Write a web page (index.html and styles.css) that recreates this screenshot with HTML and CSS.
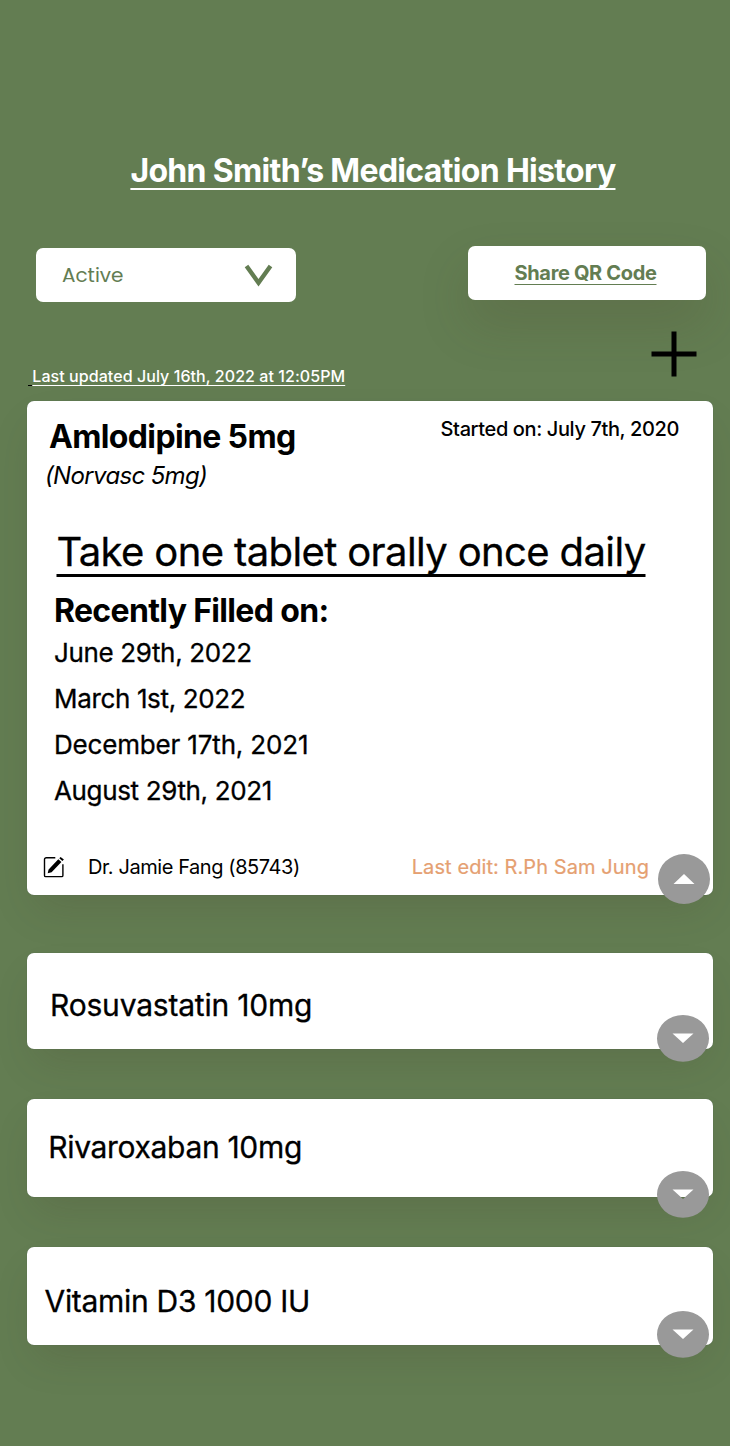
FILE: index.html
```
<!DOCTYPE html>
<html lang="en">
<head>
<meta charset="utf-8">
<title>Medication History</title>
<link rel="stylesheet" href="styles.css">
</head>
<body>
<main class="page">
  <h1 class="title"><span class="title-text">John Smith’s Medication History</span></h1>

  <div class="controls">
    <div class="select">
      <span class="select-label">Active</span>
      <svg class="select-icon" width="30" height="24" viewBox="0 0 30 24"><path d="M2.5 2 L14.5 18.8 L26.5 2" fill="none" stroke="#637d52" stroke-width="4.4"/></svg>
    </div>
    <a class="share"><span class="share-text">Share QR Code</span></a>
  </div>

  <div class="meta">
    <p class="updated"><span class="updated-lead"> </span><span class="updated-text">Last updated July 16th, 2022 at 12:05PM</span></p>
    <svg class="add" width="46" height="46" viewBox="0 0 46 46"><path d="M0.5 23H45.5M23 0.5V45.5" stroke="#000" stroke-width="5"/></svg>
  </div>

  <section class="card card-open">
    <header class="card-head">
      <div>
        <h2 class="drug">Amlodipine 5mg</h2>
        <p class="brand">(Norvasc 5mg)</p>
      </div>
      <p class="started">Started on: July 7th, 2020</p>
    </header>
    <p class="directions"><span class="directions-text">Take one tablet orally once daily</span></p>
    <h3 class="fills-title">Recently Filled on:</h3>
    <ul class="fills">
      <li class="fill">June 29th, 2022</li>
      <li class="fill">March 1st, 2022</li>
      <li class="fill fill-long">December 17th, 2021</li>
      <li class="fill">August 29th, 2021</li>
    </ul>
    <footer class="card-foot">
      <svg class="edit" width="22" height="22" viewBox="0 0 22 22">
        <path d="M12.3 1.8H3.3A1.8 1.8 0 0 0 1.5 3.6V19.4A1.2 1.2 0 0 0 2.7 20.6H18.7A1.2 1.2 0 0 0 19.9 19.4V8.3" fill="none" stroke="#000" stroke-width="1.4"/>
        <path d="M4.7 17.3L5.6 13.4L15.3 3.2L18.4 6.1L8.6 16.2Z M16.3 2.2L17.6 .9L20.9 3.6L19.4 5.1Z" fill="#000"/>
      </svg>
      <span class="doctor">Dr. Jamie Fang (85743)</span>
      <span class="last-edit">Last edit: R.Ph Sam Jung</span>
    </footer>
    <svg class="toggle toggle-up" width="52" height="50" viewBox="0 0 52 50"><path fill-rule="evenodd" fill="#999" d="M26 0A26 25 0 0 1 26 50A26 25 0 0 1 26 0ZM26 20L15.5 30H36.5Z"/></svg>
  </section>

  <section class="card card-rosuvastatin">
    <h2 class="name name-rosuvastatin">Rosuvastatin 10mg</h2>
    <svg class="toggle toggle-down" width="52" height="47" viewBox="0 0 52 47"><path fill-rule="evenodd" fill="#999" d="M26 0A26 23.4 0 0 1 26 46.8A26 23.4 0 0 1 26 0ZM15.5 18.5H36.5L26 28Z"/></svg>
  </section>

  <section class="card card-rivaroxaban">
    <h2 class="name name-rivaroxaban">Rivaroxaban 10mg</h2>
    <svg class="toggle toggle-low" width="52" height="47" viewBox="0 0 52 47"><path fill-rule="evenodd" fill="#999" d="M26 0A26 23.4 0 0 1 26 46.8A26 23.4 0 0 1 26 0ZM15.5 18.5H36.5L26 28Z"/></svg>
  </section>

  <section class="card card-vitamin">
    <h2 class="name name-vitamin">Vitamin D3 1000 IU</h2>
    <svg class="toggle toggle-down" width="52" height="47" viewBox="0 0 52 47"><path fill-rule="evenodd" fill="#999" d="M26 0A26 23.4 0 0 1 26 46.8A26 23.4 0 0 1 26 0ZM15.5 18.5H36.5L26 28Z"/></svg>
  </section>
</main>
</body>
</html>
```
FILE: styles.css
```
* { box-sizing: border-box; }
body { margin: 0; background: #637d52; color: #000; font-family: Inter, "Liberation Sans", sans-serif; }
h1, h2, h3, p, ul { margin: 0; padding: 0; }
ul { list-style: none; }
svg { display: block; flex: none; }
.page { height: 1446px; padding: 151px 17px 0 27px; overflow: hidden; }

.title { padding-left: 103.4px; font-size: 32px; line-height: 40px; font-weight: 700; letter-spacing: -0.675px; color: #fff; white-space: nowrap; }
.title-text, .share-text, .updated-text, .updated-lead, .directions-text { text-decoration: underline; text-decoration-skip-ink: none; }
.title-text { text-decoration-thickness: 2px; text-underline-offset: 6px; }

.controls { display: flex; justify-content: space-between; align-items: flex-start; margin-top: 55px; padding: 0 7px 0 9px; }
.select { display: flex; align-items: center; justify-content: space-between; width: 260px; height: 54px; margin-top: 2px; padding: 0 22px 0 26px; background: #fff; border-radius: 7px; }
.select-label { font-family: Poppins, Inter, sans-serif; font-size: 20px; line-height: 24px; font-weight: 400; color: #637d52; }
.select-icon { margin-top: 2px; }
.share { display: flex; align-items: center; justify-content: center; width: 238px; height: 54px; padding-right: 3px; background: #fff; border-radius: 7px; box-shadow: 0 24px 50px rgba(70, 60, 40, 0.18); }
.share-text { font-size: 20px; line-height: 24px; font-weight: 700; letter-spacing: -0.343px; color: #637d52; text-decoration-thickness: 1px; text-underline-offset: 4px; }

.meta { display: flex; justify-content: space-between; align-items: flex-start; height: 99px; padding: 29px 16px 0 1px; }
.updated { margin-top: 35px; font-size: 16px; line-height: 20px; font-weight: 500; letter-spacing: 0.063px; color: #fff; white-space: pre; }
.updated-text, .updated-lead { text-decoration-thickness: 1px; text-underline-offset: 3px; }
.updated-lead { color: #000; }

.card { position: relative; background: #fff; border-radius: 7px; box-shadow: 0 0 1px rgba(12, 26, 75, 0.24), 0 20px 40px -8px rgba(60, 50, 40, 0.16); }
.card-open { height: 494px; padding: 16px 34px 0 17px; }
.card-head { display: flex; justify-content: space-between; align-items: flex-start; }
.drug { padding-left: 5px; font-size: 32px; line-height: 40px; font-weight: 700; letter-spacing: -0.64px; }
.brand { padding-left: 1px; font-size: 24px; line-height: 38px; font-style: italic; font-weight: 400; letter-spacing: -0.65px; }
.started { font-size: 20px; line-height: 24px; font-weight: 500; letter-spacing: -0.38px; }
.directions { margin-top: 33px; padding-left: 12.5px; font-size: 40px; line-height: 48px; letter-spacing: -0.624px; white-space: nowrap; }
.directions-text { text-decoration-thickness: 2.5px; text-underline-offset: 8px; }
.directions, .fill, .name { font-weight: 400; -webkit-text-stroke: 0.3px #000; }
.fills-title { margin-top: 15px; padding-left: 10px; font-size: 32px; line-height: 40px; font-weight: 700; letter-spacing: -0.66px; }
.fills { margin-top: -1px; padding-left: 10px; }
.fill { font-size: 26px; line-height: 46px; letter-spacing: -0.35px; }
.fill-long { letter-spacing: -0.17px; }
.card-foot { display: flex; align-items: center; margin: 41px 0 0 -1px; font-size: 20px; line-height: 24px; white-space: nowrap; }
.doctor { margin-left: 23px; letter-spacing: -0.424px; }
.last-edit { margin-left: auto; margin-right: 30px; font-weight: 400; letter-spacing: 0.08px; color: #e5a071; -webkit-text-stroke: 0.2px #e5a071; }

.name { font-size: 30px; line-height: 36px; }
.card-rosuvastatin { height: 96px; margin-top: 58px; padding: 34px 0 0 23px; }
.card-rivaroxaban { height: 98px; margin-top: 50px; padding: 30px 0 0 21.3px; }
.card-vitamin { height: 98px; margin-top: 50px; padding: 36px 0 0 17.5px; }
.name-rosuvastatin { letter-spacing: -0.2px; }
.name-rivaroxaban { letter-spacing: -0.33px; }
.name-vitamin { letter-spacing: -0.3px; }

.toggle { position: absolute; }
.toggle-up { right: 3px; bottom: -9px; }
.toggle-down { right: 4px; bottom: -13px; }
.toggle-low { right: 4px; bottom: -21px; }
```
